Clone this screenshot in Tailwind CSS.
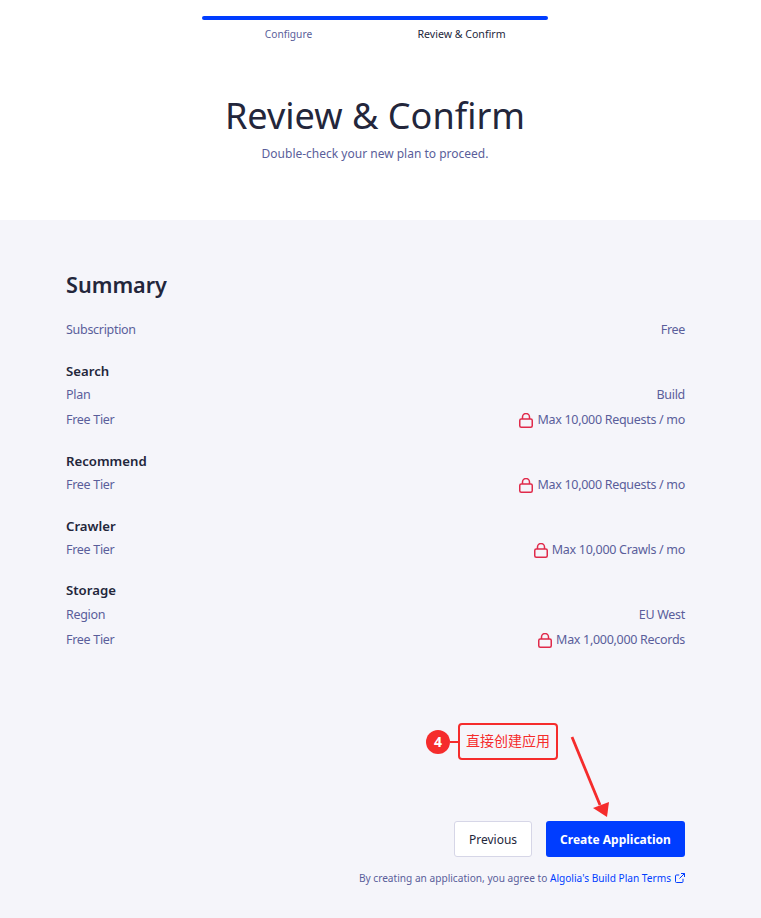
<!DOCTYPE html>
<html lang="en">
<head>
    <meta charset="UTF-8">
    <meta name="viewport" content="width=device-width, initial-scale=1.0">
    <title>Review & Confirm</title>
    <script src="https://cdn.jsdelivr.net/npm/@tailwindcss/browser@4"></script>
</head>
<body class="bg-white font-['Noto_Sans','Noto_Sans_CJK_SC',sans-serif] text-[#5a5e9a]">
    <div class="h-[220px] w-[750px] bg-white flex flex-col items-center">
        <div class="w-[346px] mt-4">
            <div class="h-1 rounded-full bg-[#003dff]"></div>
            <div class="flex text-[10.2px] leading-4 mt-[6px] text-center">
                <div class="w-1/2">Configure</div>
                <div class="w-1/2 text-[10.6px] text-[#23263b]">Review &amp; Confirm</div>
            </div>
        </div>
        <h1 class="text-[36.1px] leading-[48px] text-[#23263b] mt-[49px]">Review &amp; Confirm</h1>
        <p class="text-[12px] leading-5 mt-[5px]">Double-check your new plan to proceed.</p>
    </div>

    <div class="relative h-[698px] bg-[#f5f5fa] pl-[66px] pr-[76px] pt-[50px] text-[12.5px] tracking-[-0.3px]">
        <h2 class="text-[21.6px] tracking-normal leading-[30px] font-semibold text-[#23263b]">Summary</h2>

        <div class="flex justify-between h-[25px] items-center mt-[18px]"><span>Subscription</span><span>Free</span></div>

        <div class="font-semibold text-[13.2px] tracking-normal text-[#23263b] leading-5 mt-[18px]">Search</div>
        <div class="flex justify-between h-[25px] items-center mt-[2px]"><span>Plan</span><span>Build</span></div>
        <div class="flex justify-between h-[25px] items-center"><span>Free Tier</span>
            <span class="flex items-center gap-[4px]">
                <svg class="w-[14px] h-[15px] -mt-[1px] -ml-[1px]" viewBox="0 0 14 15" fill="none" stroke="#e02a4a" stroke-width="1.5"><rect x="0.75" y="6" width="12.5" height="8.25" rx="1.5"/><path d="M3.5 6V4a3.5 3.5 0 0 1 7 0v2"/></svg>
                Max 10,000 Requests / mo</span></div>

        <div class="font-semibold text-[13.2px] tracking-normal text-[#23263b] leading-5 mt-[18px]">Recommend</div>
        <div class="flex justify-between h-[25px] items-center mt-[2px]"><span>Free Tier</span>
            <span class="flex items-center gap-[4px]">
                <svg class="w-[14px] h-[15px] -mt-[1px] -ml-[1px]" viewBox="0 0 14 15" fill="none" stroke="#e02a4a" stroke-width="1.5"><rect x="0.75" y="6" width="12.5" height="8.25" rx="1.5"/><path d="M3.5 6V4a3.5 3.5 0 0 1 7 0v2"/></svg>
                Max 10,000 Requests / mo</span></div>

        <div class="font-semibold text-[13.2px] tracking-normal text-[#23263b] leading-5 mt-[18px]">Crawler</div>
        <div class="flex justify-between h-[25px] items-center mt-[2px]"><span>Free Tier</span>
            <span class="flex items-center gap-[4px]">
                <svg class="w-[14px] h-[15px] -mt-[1px] -ml-[1px]" viewBox="0 0 14 15" fill="none" stroke="#e02a4a" stroke-width="1.5"><rect x="0.75" y="6" width="12.5" height="8.25" rx="1.5"/><path d="M3.5 6V4a3.5 3.5 0 0 1 7 0v2"/></svg>
                Max 10,000 Crawls / mo</span></div>

        <div class="font-semibold text-[13.2px] tracking-normal text-[#23263b] leading-5 mt-[17px]">Storage</div>
        <div class="flex justify-between h-[25px] items-center mt-[3px]"><span>Region</span><span>EU West</span></div>
        <div class="flex justify-between h-[25px] items-center"><span>Free Tier</span>
            <span class="flex items-center gap-[4px]">
                <svg class="w-[14px] h-[15px] -mt-[1px] -ml-[1px]" viewBox="0 0 14 15" fill="none" stroke="#e02a4a" stroke-width="1.5"><rect x="0.75" y="6" width="12.5" height="8.25" rx="1.5"/><path d="M3.5 6V4a3.5 3.5 0 0 1 7 0v2"/></svg>
                Max 1,000,000 Records</span></div>

        <div class="flex justify-end gap-[14px] mt-[168px] tracking-normal text-[12px]">
            <button class="w-[78px] h-9 pt-[2px] bg-white border border-[#d6d6e7] rounded-[3px] text-[#23263b]">Previous</button>
            <button class="w-[139px] h-9 pt-[2px] bg-[#003dff] rounded-[3px] text-white font-bold">Create Application</button>
        </div>
        <div class="flex justify-end items-center gap-[4px] mt-[13px] text-[10.15px] tracking-normal leading-4">
            <span>By creating an application, you agree to <span class="text-[#003dff]">Algolia's Build Plan Terms</span></span>
            <svg class="w-[10px] h-[10px]" viewBox="0 0 10 10" fill="none" stroke="#003dff" stroke-width="1"><path d="M8 5.8V8.5a1 1 0 0 1-1 1H1.5a1 1 0 0 1-1-1V3a1 1 0 0 1 1-1h2.7M6 .5h3.5V4M9.5.5 4.5 5.5"/></svg>
        </div>

        <!-- annotation over the page -->
        <div class="absolute left-[426px] top-[503px] flex items-center tracking-normal">
            <div class="w-6 h-6 rounded-full bg-[#f52c2c] text-white text-[14px] font-bold flex items-center justify-center">4</div>
            <div class="w-2 h-[2px] bg-[#f52c2c]"></div>
            <div class="w-[100px] h-[37px] pb-[2px] bg-[#f5f5fa] border-2 border-[#f52c2c] rounded-[4px] text-[#f52c2c] text-[14px] flex items-center justify-center">直接创建应用</div>
        </div>
        <svg class="absolute left-[565px] top-[512px] w-[50px] h-[90px]" viewBox="0 0 50 90" fill="none">
            <path d="M7 5 L35 73" stroke="#f52c2c" stroke-width="2.8"/>
            <path d="M28 76 L44 70 L42 85 Z" fill="#f52c2c"/>
        </svg>
    </div>
</body>
</html>
